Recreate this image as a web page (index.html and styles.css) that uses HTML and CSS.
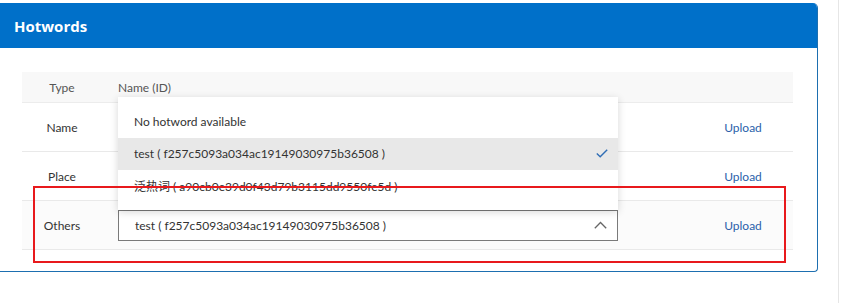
FILE: index.html
```html
<!DOCTYPE html>
<html>
<head>
<meta charset="utf-8">
<link rel="stylesheet" href="styles.css">
</head>
<body>
<div class="page">
  <section class="panel">
    <header class="panel-head">Hotwords</header>
    <div class="panel-body">
      <div class="table">
        <div class="row head">
          <div class="c-type">Type</div>
          <div class="c-name">Name (ID)</div>
          <div class="c-act"></div>
        </div>
        <div class="row">
          <div class="c-type">Name</div>
          <div class="c-name"></div>
          <div class="c-act"><a class="link">Upload</a></div>
        </div>
        <div class="row">
          <div class="c-type">Place</div>
          <div class="c-name"></div>
          <div class="c-act"><a class="link">Upload</a></div>
        </div>
        <div class="row hover">
          <div class="c-type">Others</div>
          <div class="c-name">
            <div class="select-wrap">
              <ul class="menu">
                <li class="opt">No hotword available</li>
                <li class="opt selected">test ( f257c5093a034ac19149030975b36508 )
                  <svg class="check" width="12" height="9" viewBox="0 0 12 9"><path d="M0.8 4.6 L4.2 7.8 L11.2 0.8" fill="none" stroke="#2f6db5" stroke-width="1.4"/></svg>
                </li>
                <li class="opt">泛热词 ( a90cb0e39d0f43d79b3115dd9550fe5d )</li>
              </ul>
              <div class="select">
                <span>test ( f257c5093a034ac19149030975b36508 )</span>
                <svg class="chev" width="13" height="8" viewBox="0 0 13 8"><path d="M0.8 7.2 L6.5 1.5 L12.2 7.2" fill="none" stroke="#666" stroke-width="1.3"/></svg>
              </div>
            </div>
          </div>
          <div class="c-act"><a class="link">Upload</a></div>
        </div>
      </div>
    </div>
  </section>
  <div class="annot"></div>
  <div class="scroll-line"></div>
</div>
</body>
</html>
```

FILE: styles.css
```css
* { box-sizing: border-box; }
html, body { margin: 0; padding: 0; background: #fff; }
body {
  font-family: Lato, "Noto Sans CJK SC", sans-serif;
  font-size: 12px;
  color: #333;
}
.page {
  position: relative;
  width: 845px;
  height: 303px;
  padding-top: 3px;
}
.panel {
  width: 818px;
  border-right: 1px solid #1d6fb0;
  border-bottom: 1px solid #1d6fb0;
  border-radius: 0 5px 4px 0;
  overflow: hidden;
}
.panel-head {
  height: 45px;
  background: #0070c9;
  color: #fff;
  font-family: "Open Sans", sans-serif;
  font-weight: 700;
  font-size: 15px;
  padding: 0 14px;
  display: flex;
  align-items: center;
}
.panel-body {
  padding: 24px 24px 21px 22px;
}
.table { width: 771px; }
.row {
  display: grid;
  grid-template-columns: 80px 1fr 100px;
  column-gap: 16px;
  align-items: center;
  height: 49px;
  border-bottom: 1px solid #e9e9e9;
}
.row.head {
  height: 31px;
  background: #f8f8f8;
  border-bottom: 1px solid #ececec;
  color: #555;
}
.row.hover { background: #fbfbfb; }
.c-type { text-align: center; }
.c-act { text-align: center; }
.link { color: #2b5faa; }
.select-wrap { position: relative; width: 500px; }
.select {
  height: 31px;
  border: 1px solid #7a7a7a;
  background: #fff;
  padding: 0 10px 0 16px;
  display: flex;
  align-items: center;
  justify-content: space-between;
}
.menu {
  position: absolute;
  left: 0;
  right: 0;
  bottom: 31px;
  margin: 0;
  padding: 9px 0 8px;
  list-style: none;
  background: #fff;
  box-shadow: 0 2px 8px rgba(0, 0, 0, 0.16);
  z-index: 2;
}
.opt {
  height: 32px;
  padding: 0 10px 0 16px;
  display: flex;
  align-items: center;
  justify-content: space-between;
}
.opt.selected { background: #e8e8e8; }
.annot {
  position: absolute;
  left: 33px;
  top: 186px;
  width: 753px;
  height: 77px;
  border: 2px solid #e8191c;
  z-index: 3;
}
.scroll-line {
  position: absolute;
  left: 838px;
  top: 0;
  width: 1px;
  height: 303px;
  background: #e6e6e6;
}
```
